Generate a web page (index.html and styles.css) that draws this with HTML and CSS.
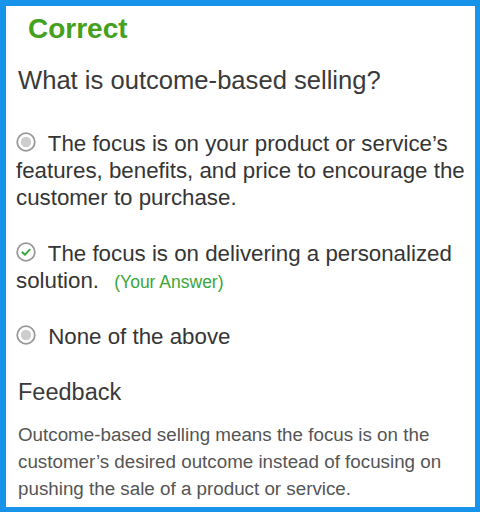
FILE: index.html
```html
<!DOCTYPE html>
<html>
<head>
<meta charset="utf-8">
<link rel="stylesheet" href="styles.css">
</head>
<body>
<div class="card">
  <div class="title">Correct</div>
  <div class="question">What is outcome-based selling?</div>
  <p class="option opt1"><svg class="radio" viewBox="0 0 20 20" width="20" height="20"><circle cx="10" cy="10" r="8.8" fill="#fff" stroke="#9a9a9a" stroke-width="1.8"/><circle cx="10" cy="10" r="5.2" fill="#cdcdcd"/></svg> The focus is on your product or service’s features, benefits, and price to encourage the customer to purchase.</p>
  <p class="option opt2"><svg class="radio" viewBox="0 0 20 20" width="20" height="20"><circle cx="10" cy="10" r="8.8" fill="#fff" stroke="#9a9a9a" stroke-width="1.8"/><path d="M6.3 10.3 L8.9 12.8 L13.7 7.7" fill="none" stroke="#3aa63a" stroke-width="1.9" stroke-linecap="round" stroke-linejoin="round"/></svg> The focus is on delivering a personalized solution. <span class="yours">(Your Answer)</span></p>
  <p class="option opt3"><svg class="radio" viewBox="0 0 20 20" width="20" height="20"><circle cx="10" cy="10" r="8.8" fill="#fff" stroke="#9a9a9a" stroke-width="1.8"/><circle cx="10" cy="10" r="5.2" fill="#cdcdcd"/></svg> None of the above</p>
  <div class="fb-title">Feedback</div>
  <p class="fb-text">Outcome-based selling means the focus is on the customer’s desired outcome instead of focusing on pushing the sale of a product or service.</p>
</div>
</body>
</html>
```

FILE: styles.css
```css
html, body {
  margin: 0;
  padding: 0;
  background: #fff;
}
.card {
  box-sizing: border-box;
  width: 480px;
  height: 512px;
  border-style: solid;
  border-color: #1793e9;
  border-width: 6px 5px 5px 6px;
  padding: 0 4px 0 9px;
  font-family: "Liberation Sans", Arial, sans-serif;
  color: #333;
  overflow: hidden;
}
.title {
  margin: 7px 0 0 13px;
  font-size: 28px;
  line-height: 32px;
  font-weight: bold;
  color: #45a01d;
}
.question {
  margin: 20px 0 0 3px;
  font-size: 25.6px;
  line-height: 30px;
  color: #3a3a3a;
}
.option {
  margin: 0 0 0 1px;
  font-size: 22.3px;
  line-height: 27px;
  color: #353535;
}
.opt1 { margin-top: 35px; }
.opt2 { margin-top: 29px; }
.opt3 { margin-top: 29px; }
.radio {
  width: 20px;
  height: 20px;
  vertical-align: -1px;
  margin-right: 6px;
}
.yours {
  margin-left: 9px;
  font-size: 17.5px;
  line-height: 20px;
  color: #3aa63a;
}
.fb-title {
  margin: 28px 0 0 3px;
  font-size: 23.5px;
  line-height: 28px;
  color: #3a3a3a;
}
.fb-text {
  margin: 15px 0 0 3px;
  font-size: 18.8px;
  line-height: 27px;
  color: #555;
}
```
